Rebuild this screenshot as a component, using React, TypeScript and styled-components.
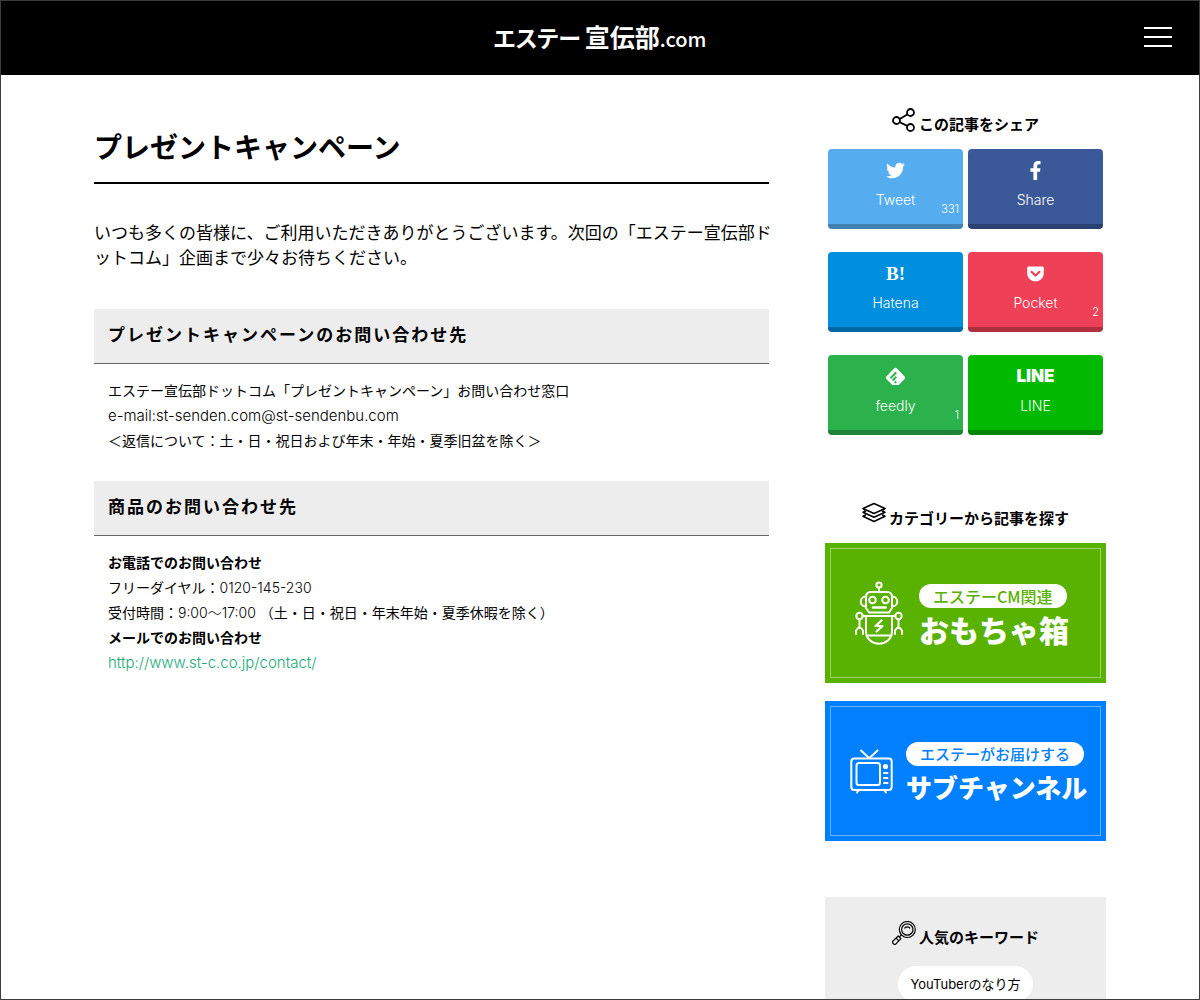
import React from "react";
import styled, { createGlobalStyle } from "styled-components";
import { FaTwitter, FaFacebookF, FaGetPocket } from "react-icons/fa";
import { SiFeedly } from "react-icons/si";

const GlobalStyle = createGlobalStyle`
  *, *::before, *::after { box-sizing: border-box; }
  body {
    margin: 0;
    background: #fff;
    color: #000;
    font-family: "Inter", "Noto Sans CJK JP", sans-serif;
    font-size: 14px;
    line-height: 25px;
  }
  h1, h2, h3, p { margin: 0; }
  a { text-decoration: none; }
`;

const Frame = styled.div`
  height: 100vh;
  overflow: hidden;
  border: 1px solid #3c3c3c;
`;

const Header = styled.header`
  display: grid;
  grid-template-columns: 1fr auto 1fr;
  align-items: center;
  height: 74px;
  padding: 0 27px 2px;
  background: #000;
`;

const Logo = styled.a`
  grid-column: 2;
  display: flex;
  align-items: baseline;
  color: #fff;
  font-family: "Noto Sans CJK JP", sans-serif;
  line-height: 40px;
`;

const LogoPart = styled.span<{ $size: number; $weight: number }>`
  font-size: ${(p) => p.$size}px;
  font-weight: ${(p) => p.$weight};
  font-feature-settings: "palt";

  &:first-child {
    margin-right: 4px;
  }
`;

const MenuButton = styled.button`
  justify-self: end;
  display: flex;
  flex-direction: column;
  gap: 7px;
  padding: 0;
  border: 0;
  background: none;
  cursor: pointer;
`;

const MenuBar = styled.span`
  width: 28px;
  height: 2px;
  background: #fff;
`;

const Page = styled.div`
  display: grid;
  grid-template-columns: minmax(0, 1fr) 281px;
  gap: 56px;
  max-width: 1012px;
  margin: 0 auto;
`;

const Main = styled.main`
  padding-top: 52px;
`;

const Title = styled.h1`
  padding-bottom: 13px;
  border-bottom: 2px solid #000;
  font-size: 28px;
  line-height: 42px;
  font-weight: 700;
`;

const Lead = styled.p`
  margin: 37px -6px 38px 0;
  font-size: 17px;
`;

const SectionTitle = styled.h2`
  padding: 14px 14px 15px;
  border-bottom: 1px solid #666;
  background: #ededed;
  font-size: 17px;
  font-weight: 700;
  letter-spacing: 2px;
`;

const SectionBody = styled.div`
  padding: 14px 14px 28px;
`;

const Latin = styled.span<{ $size: number }>`
  font-size: ${(p) => p.$size}px;
  font-weight: 300;
`;

const TextLink = styled.a`
  color: #1bab78;
`;

const Sidebar = styled.aside`
  padding-top: 33px;
`;

const SideHeading = styled.h3<{ $gap: number }>`
  display: flex;
  justify-content: center;
  align-items: flex-end;
  gap: 3px;
  margin-bottom: ${(p) => p.$gap}px;
  font-size: 15px;
  line-height: 14px;
  font-weight: 700;
`;

const HeadingIcon = styled.svg`
  width: 24px;
  height: 24px;
  fill: none;
  stroke: #000;
  stroke-linejoin: round;
  stroke-linecap: round;
`;

const ShareGrid = styled.div`
  display: grid;
  grid-template-columns: 1fr 1fr;
  gap: 23px 5px;
  margin: 0 3px 67px;
`;

const ShareLink = styled.a<{ $bg: string; $edge: string }>`
  position: relative;
  display: flex;
  flex-direction: column;
  align-items: center;
  gap: 6px;
  height: 80px;
  padding-top: 11px;
  border-bottom: 5px solid ${(p) => p.$edge};
  border-radius: 4px;
  background: ${(p) => p.$bg};
  color: #fff;
  font-weight: 300;
`;

const ShareIcon = styled.span`
  display: flex;
  align-items: center;
  height: 21px;
  font-size: 19px;
`;

const HatenaMark = styled.span`
  font-family: "Liberation Serif", serif;
  font-weight: 700;
`;

const LineMark = styled.span`
  font-size: 17px;
  font-weight: 900;
`;

const ShareCount = styled.span`
  position: absolute;
  right: 4px;
  bottom: 2px;
  font-size: 11px;
`;

const Banner = styled.a<{ $bg: string }>`
  display: flex;
  padding: 5px;
  margin-bottom: 18px;
  background: ${(p) => p.$bg};
  color: ${(p) => p.$bg};
`;

const BannerInner = styled.span<{ $inset: number; $gap: number }>`
  flex: 1;
  display: flex;
  align-items: center;
  gap: ${(p) => p.$gap}px;
  height: 130px;
  padding-left: ${(p) => p.$inset}px;
  border: 1px solid rgba(255, 255, 255, 0.4);
`;

const BannerArt = styled.svg`
  fill: none;
  stroke: #fff;
  stroke-width: 2;
  stroke-linejoin: round;
  stroke-linecap: round;
`;

const BannerText = styled.span`
  display: flex;
  flex-direction: column;
  gap: 3px;
  padding-top: 5px;
`;

const BannerPill = styled.span<{ $size: number }>`
  align-self: flex-start;
  padding: 0 14px;
  border-radius: 12px;
  background: #fff;
  font-family: "Noto Sans CJK JP", sans-serif;
  font-size: ${(p) => p.$size}px;
  font-weight: 500;
  line-height: 24px;
`;

const BannerName = styled.span<{ $size: number }>`
  color: #fff;
  font-family: "Noto Sans CJK JP", sans-serif;
  font-size: ${(p) => p.$size}px;
  font-weight: 900;
  line-height: 36px;
`;

const KeywordBox = styled.section`
  margin-top: 56px;
  padding: 24px 20px;
  background: #ededed;
`;

const KeywordList = styled.div`
  display: flex;
  flex-wrap: wrap;
  justify-content: center;
  gap: 8px;
`;

const Keyword = styled.a`
  padding: 0 12px;
  border-radius: 18px;
  background: #fff;
  color: #000;
  font-size: 13px;
  line-height: 36px;
`;

const ShareGlyph = () => (
  <HeadingIcon viewBox="0 0 24 24" strokeWidth="1.8" aria-hidden="true">
    <circle cx="4.5" cy="12.5" r="3.5" />
    <circle cx="18.5" cy="4.5" r="3.5" />
    <circle cx="18.5" cy="19.5" r="3.5" />
    <path d="M7.7 11 15.3 6.400M7.7 14.200l7.600 3.700" />
  </HeadingIcon>
);

const LayersGlyph = () => (
  <HeadingIcon viewBox="0 0 24 24" strokeWidth="1.500" aria-hidden="true">
    <path d="M12 1.500 23 6.500l-11 5-11-5z" />
    <path d="M3.500 9.200 1 10.300l11 5 11-5-2.500-1.100" />
    <path d="M3.500 13 1 14.200l11 5.300 11-5.300L20.500 13" />
    <path d="m1 6.500 2.500 2.700M23 6.500l-2.500 2.700" strokeWidth="1" />
  </HeadingIcon>
);

const SearchGlyph = () => (
  <HeadingIcon viewBox="0 0 24 24" strokeWidth="1.200" aria-hidden="true">
    <circle cx="15.300" cy="8.500" r="8" />
    <circle cx="15.300" cy="8.500" r="5.700" />
    <path d="M12.800 7a3.500 3.500 0 0 1 5 0" />
    <path d="m9.300 14-1.800 1.800" />
    <path d="m6.300 15 2.600 2.600-5 5.300c-2 1.300-4.200-.900-2.900-2.900zM4.300 17.300l2.500 2.500" />
  </HeadingIcon>
);

const Robot = () => (
  <BannerArt width="48" height="64" viewBox="0 0 48 64" aria-hidden="true">
    <circle cx="24" cy="4" r="2.600" />
    <path d="M24 6.600V11" />
    <path d="M15.500 11h17a4.500 4.500 0 0 1 4.500 4.500V27l-3 4.500H14L11 27V15.500A4.500 4.500 0 0 1 15.500 11z" />
    <path d="M11 15.500c-7 0-7 10 0 10M37 15.500c7 0 7 10 0 10" />
    <circle cx="17.500" cy="19" r="3.300" />
    <circle cx="30.500" cy="19" r="3.300" />
    <path d="M18 26.500h12.500" strokeWidth="2.600" />
    <circle cx="4.500" cy="35" r="3.200" />
    <circle cx="43.500" cy="35" r="3.200" />
    <path d="M7.700 35h32.600" />
    <path d="M11 35v15c0 17 26 17 26 0V35M11.500 54.500h25" />
    <path d="M4.500 38.200V47M1 53v-3.500L3 47h3l2 2.500V53M43.500 38.200V47M40 53v-3.500l2-2.500h3l2 2.500V53" />
    <path d="m26.500 39.500-6 5.500h7L21.500 50.500" strokeWidth="2.200" />
  </BannerArt>
);

const Television = () => (
  <BannerArt width="43" height="45" viewBox="0 0 43 45" aria-hidden="true">
    <rect x="1.300" y="9.500" width="40.400" height="31.500" rx="3" />
    <rect x="6.500" y="14" width="23.500" height="22" rx="2.500" />
    <path d="m11 1.500 8 7.500M27.500 1.500l-8 7.500M8.500 41.500 7 43.500M34.500 41.500l1.500 2" />
    <circle cx="35.500" cy="17.500" r="1.600" fill="#fff" />
    <path d="M34 24h3.500M34 29h3.500M34 34h3.500" />
  </BannerArt>
);

const shares = [
  { label: "Tweet", icon: <FaTwitter />, bg: "#55acee", edge: "#4281b2", count: "331" },
  { label: "Share", icon: <FaFacebookF />, bg: "#3b5998", edge: "#2b4170" },
  { label: "Hatena", icon: <HatenaMark>B!</HatenaMark>, bg: "#008fde", edge: "#0069a3" },
  { label: "Pocket", icon: <FaGetPocket />, bg: "#ee4056", edge: "#af2f3f", count: "2" },
  { label: "feedly", icon: <SiFeedly />, bg: "#2bb24c", edge: "#208338", count: "1" },
  { label: "LINE", icon: <LineMark>LINE</LineMark>, bg: "#00b900", edge: "#008500" },
];

const banners = [
  { lead: "エステーCM関連", name: "おもちゃ箱", bg: "#5ab200", art: <Robot />, inset: 24, gap: 16, leadSize: 16, nameSize: 30 },
  { lead: "エステーがお届けする", name: "サブチャンネル", bg: "#007fff", art: <Television />, inset: 19, gap: 13, leadSize: 15, nameSize: 26 },
];

export default function App() {
  return (
    <>
      <GlobalStyle />
      <Frame>
        <Header>
          <Logo href="#">
            <LogoPart $size={23} $weight={700}>エステー</LogoPart>
            <LogoPart $size={25} $weight={700}>宣伝部</LogoPart>
            <LogoPart $size={20} $weight={500}>.com</LogoPart>
          </Logo>
          <MenuButton type="button" aria-label="メニュー">
            <MenuBar />
            <MenuBar />
            <MenuBar />
          </MenuButton>
        </Header>
        <Page>
          <Main>
            <Title>プレゼントキャンペーン</Title>
            <Lead>
              いつも多くの皆様に、ご利用いただきありがとうございます。次回の「エステー宣伝部ドットコム」企画まで少々お待ちください。
            </Lead>
            <SectionTitle>プレゼントキャンペーンのお問い合わせ先</SectionTitle>
            <SectionBody>
              <p>エステー宣伝部ドットコム「プレゼントキャンペーン」お問い合わせ窓口</p>
              <p><Latin $size={15}>e-mail:st-senden.com@st-sendenbu.com</Latin></p>
              <p>＜返信について：土・日・祝日および年末・年始・夏季旧盆を除く＞</p>
            </SectionBody>
            <SectionTitle>商品のお問い合わせ先</SectionTitle>
            <SectionBody>
              <p><strong>お電話でのお問い合わせ</strong></p>
              <p>フリーダイヤル：<Latin $size={14}>0120-145-230</Latin></p>
              <p>受付時間：<Latin $size={14}>9:00〜17:00</Latin> （土・日・祝日・年末年始・夏季休暇を除く）</p>
              <p><strong>メールでのお問い合わせ</strong></p>
              <p><TextLink href="#"><Latin $size={15}>http://www.st-c.co.jp/contact/</Latin></TextLink></p>
            </SectionBody>
          </Main>
          <Sidebar>
            <SideHeading $gap={17}>
              <ShareGlyph />
              この記事をシェア
            </SideHeading>
            <ShareGrid>
              {shares.map((s) => (
                <ShareLink key={s.label} href="#" $bg={s.bg} $edge={s.edge}>
                  <ShareIcon>{s.icon}</ShareIcon>
                  <span>{s.label}</span>
                  {s.count && <ShareCount>{s.count}</ShareCount>}
                </ShareLink>
              ))}
            </ShareGrid>
            <SideHeading $gap={17}>
              <LayersGlyph />
              カテゴリーから記事を探す
            </SideHeading>
            {banners.map((b) => (
              <Banner key={b.name} href="#" $bg={b.bg}>
                <BannerInner $inset={b.inset} $gap={b.gap}>
                  {b.art}
                  <BannerText>
                    <BannerPill $size={b.leadSize}>{b.lead}</BannerPill>
                    <BannerName $size={b.nameSize}>{b.name}</BannerName>
                  </BannerText>
                </BannerInner>
              </Banner>
            ))}
            <KeywordBox>
              <SideHeading $gap={21}>
                <SearchGlyph />
                人気のキーワード
              </SideHeading>
              <KeywordList>
                <Keyword href="#">YouTuberのなり方</Keyword>
              </KeywordList>
            </KeywordBox>
          </Sidebar>
        </Page>
      </Frame>
    </>
  );
}
